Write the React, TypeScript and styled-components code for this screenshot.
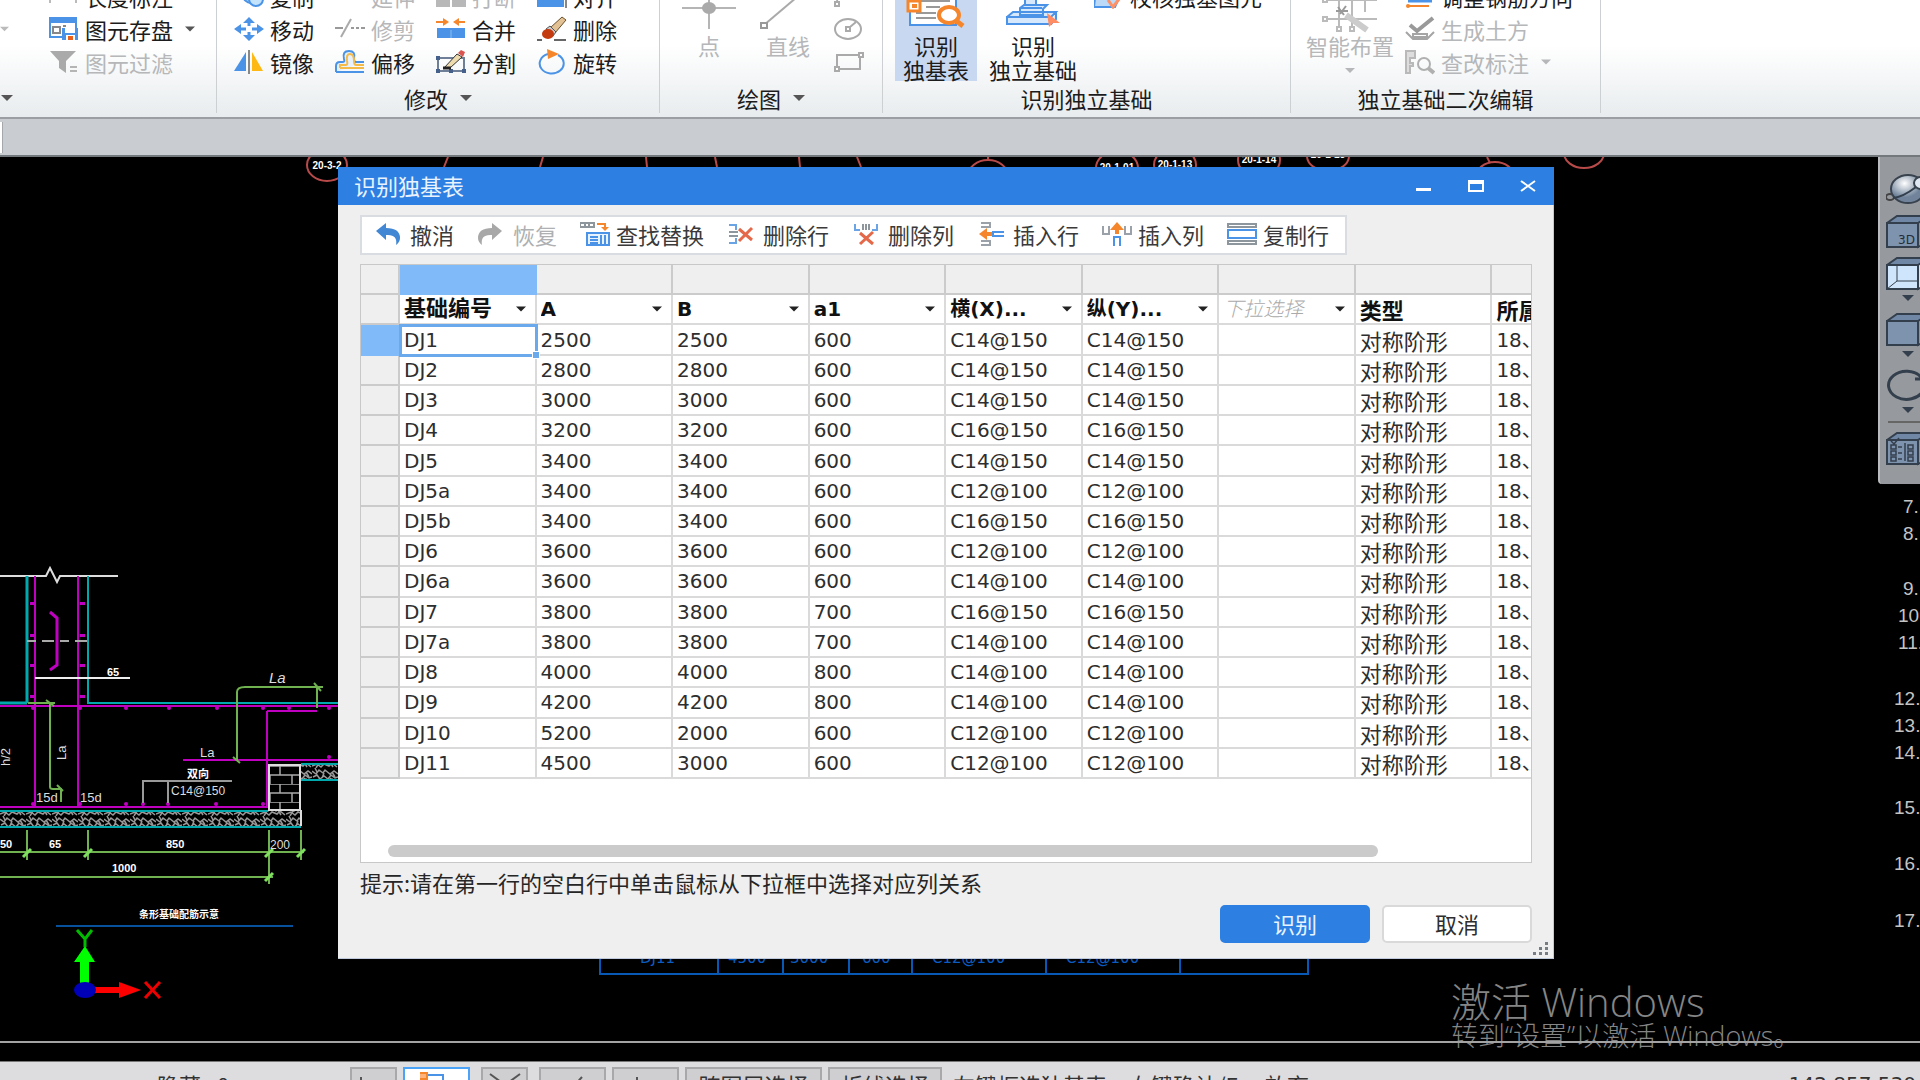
import React from 'react';
import styled, { createGlobalStyle } from 'styled-components';

const cjk = '"Noto Sans CJK SC", sans-serif';
const latin = `"DejaVu Sans", ${cjk}`;

const GlobalStyle = createGlobalStyle`
  *, *::before, *::after { box-sizing: border-box; }
  html, body { margin: 0; background: #000; overflow: hidden; }
  body { font-family: ${cjk}; font-size: 22px; color: #1c1c1c; }
  button, select { font: inherit; color: inherit; margin: 0; padding: 0; border: 0; background: none; text-align: left; white-space: nowrap; }
  svg { display: block; flex: none; }
`;

const Shell = styled.div`
  display: flex;
  flex-direction: column;
  height: 100vh;
  overflow: hidden;
`;

/* ---------- ribbon ---------- */

const Ribbon = styled.header`
  display: flex;
  flex: none;
  height: 119px;
  overflow: hidden;
  background: linear-gradient(#fff 0 45px, #e8ecee 117px);
  border-bottom: 2px solid #9b9fa3;
`;

const Group = styled.section<{ $width: number; $pad?: number }>`
  flex: none;
  width: ${(p) => p.$width}px;
  height: 113px;
  border-right: 1px solid #cdd0d2;
  & > div:first-child { padding-left: ${(p) => p.$pad ?? 0}px; }
`;

const Tools = styled.div`
  display: flex;
  height: 102px;
  margin-top: -21px;
`;

const ToolGrid = styled.div<{ $cols: string }>`
  display: grid;
  grid-template-columns: ${(p) => p.$cols};
  grid-auto-rows: 33px;
  grid-auto-flow: row;
`;

const Tool = styled.button`
  display: flex;
  align-items: center;
  gap: 6px;
  line-height: 32px;
  &:disabled { color: #b5b7b9; }
`;

const BigTool = styled.button<{ $width: number; $active?: boolean }>`
  display: flex;
  flex-direction: column;
  align-items: center;
  flex: none;
  width: ${(p) => p.$width}px;
  height: 102px;
  line-height: 24px;
  text-align: center;
  background: ${(p) => (p.$active ? '#c8d8f0' : 'none')};
  &:disabled { color: #b5b7b9; }
`;

const GroupLabel = styled.div`
  display: flex;
  align-items: center;
  justify-content: center;
  gap: 12px;
  height: 24px;
  margin-top: 5px;
  line-height: 24px;
`;

const Spacer = styled.div<{ $width: number }>`
  flex: none;
  width: ${(p) => p.$width}px;
`;

const TabStrip = styled.div`
  flex: none;
  height: 38px;
  padding: 3px 0;
  background: #c9ccd1;
  border-bottom: 2px solid #73787d;
`;

const Tab = styled.div`
  width: 3px;
  height: 31px;
  background: #fff;
  border-right: 1px solid #a5a8ab;
`;

const Caret = ({ color = '#555', w = 12 }: { color?: string; w?: number }) => (
  <svg width={w} height="6" viewBox="0 0 12 6"><path d="M0 0h12L6 6z" fill={color} /></svg>
);

const B = '#4b93e6';
const O = '#f5862b';
const G = '#b4b6b8';

const Icon = ({ children }: { children: React.ReactNode }) => (
  <svg width="30" height="26" viewBox="0 0 30 26" fill="none">{children}</svg>
);

const icons = {
  dimension: <Icon><path d="M1 0v20M27 0v20" stroke="#777" /><path d="M1 10h26" stroke={B} strokeWidth="2" /></Icon>,
  save: <Icon><rect x="1" y="2" width="26" height="19" stroke={B} strokeWidth="2" fill="#fff" /><path d="M0 2h28v5H0z" fill={B} /><path d="M4 11h7v6H4zM14 10h3" stroke="#888" strokeWidth="2" /><path d="M13 12h16v12H13z" fill={B} /><path d="M16 12h10v5H16z" fill="#fff" /><path d="M17 19h9v5h-9z" fill="#fff" /><path d="M19 20h5v4h-5z" fill="#e8601c" /></Icon>,
  filter: <Icon><path d="M1 2h26L17 12v12l-7-5v-7z" fill="#aaa" /><path d="M21 18h7M21 22h7" stroke="#b5b5b5" strokeWidth="2" /></Icon>,
  copy: <Icon><circle cx="17" cy="12" r="8" fill="#9bd0f5" stroke={B} strokeWidth="2" /><circle cx="22" cy="16" r="7" fill="#c2e3fb" stroke={B} strokeWidth="2" /></Icon>,
  move: <Icon><path d="M15 6v14M4 13h8M18 13h8" stroke={B} strokeWidth="3" /><path d="M15 1l6 6H9zM15 25l6-6H9zM0 13l7-5v10zM30 13l-7-5v10z" fill={B} /><path d="M12 10h6v6h-6z" fill="#fff" /></Icon>,
  mirror: <Icon><path d="M12 3v19H0z" fill={B} /><path d="M18 3v19h11z" fill="#fdb813" /><path d="M15 1v24" stroke="#888" strokeWidth="2" /></Icon>,
  extend: <Icon><path d="M20 12l5-14" stroke={G} strokeWidth="2" /></Icon>,
  trim: <Icon><path d="M0 12h8M16 12h3M21 12h3M26 12h4" stroke="#999" strokeWidth="2" /><path d="M6 21L16 3" stroke="#aaa" strokeWidth="2" /></Icon>,
  offset: <Icon><path d="M1 23v-6q0-4 4-4h3q2 0 1-3-2-8 5-8t5 8q0 3 2 3h8" stroke={B} strokeWidth="2" fill="#e6f1fb" /><path d="M1 23h28" stroke={B} strokeWidth="2" /><path d="M5 19v-3h6q2 0 1-4-1-7 3-7t4 7q0 4 2 4h8M5 19h24" stroke="#f4bb49" strokeWidth="2" /></Icon>,
  brk: <Icon><path d="M0 11h14v13H0zM16 11h14v13H16z" fill="#b8b8b8" /></Icon>,
  merge: <Icon><path d="M1 12h28v10H1z" fill={B} /><path d="M15 14v8" stroke="#8bbdf2" /><path d="M0 6h8M29 6h-8" stroke={O} strokeWidth="2" /><path d="M7 2l6 4-6 4zM23 2l-6 4 6 4z" fill={O} /></Icon>,
  split: <Icon><path d="M2 9h26v13H2z" stroke="#6f7f98" strokeWidth="2" /><path d="M0 7h4v4H0zM0 20h4v4H0zM26 20h4v4h-4zM13 20h4v4h-4z" fill="#46608c" /><path d="M8 19L21 5l5 3-12 11z" fill="#efdcae" stroke="#333" /><path d="M22 4l3-3 4 2-2 5z" fill="#d9534f" /><path d="M7 19h8" stroke="#222" strokeWidth="3" /></Icon>,
  align: <Icon><path d="M0 9h27v15H0z" fill={B} /><path d="M29 0v25" stroke="#888" strokeWidth="2" /></Icon>,
  erase: <Icon><path d="M13 12L25 1l4 3-11 13z" fill="#e2c294" stroke="#6b4f2a" /><path d="M9 13l4-3 6 6-3 4z" fill="#ccc" stroke="#555" /><ellipse cx="11" cy="18" rx="6" ry="5" fill="#c43b10" /><path d="M0 24h5M17 24h12" stroke="#666" strokeWidth="2" /></Icon>,
  rotate: <Icon><path d="M11 5A12 10 0 1 0 21 6" stroke={B} strokeWidth="2" /><path d="M10 0l12 5-11 5z" fill={O} /></Icon>,
  verify: <Icon><path d="M1 15h24l-4 9H0zM8 7h14v6H6z" fill="#bcd9f7" stroke={B} strokeWidth="2" /><path d="M14 17l5 7 10-13" stroke="#ff9166" strokeWidth="3" /></Icon>,
  direction: <Icon><path d="M3 18h24" stroke={B} strokeWidth="3" /><path d="M4 23h20" stroke={O} strokeWidth="2" /><circle cx="3" cy="23" r="2" fill={O} /></Icon>,
  earth: <Icon><path d="M5 9l7 6L28 2" stroke="#999" strokeWidth="4" /><path d="M1 16l7 7h14l7-7M8 18h14v3H8z" stroke="#a5a5a5" strokeWidth="2" /></Icon>,
  inspect: <Icon><path d="M1 2h9v7H5v5h3v3H5v7H1z" stroke="#b9b9b9" strokeWidth="2" fill="#ddd" /><circle cx="19" cy="15" r="6" stroke="#b0b0b0" strokeWidth="2" /><path d="M23 19l6 5" stroke="#b0b0b0" strokeWidth="4" /></Icon>,
};

function RibbonBar() {
  return (
    <Ribbon>
      <Group $width={217}>
        <Tools>
          <ToolGrid $cols="49px auto">
            <Tool aria-label="绘"><Spacer $width={16} /><Caret color="#bbb" w={9} /></Tool>
            <Tool>{icons.dimension}长度标注<Spacer $width={3} /><Caret color="#bbb" w={9} /></Tool>
            <Tool disabled aria-label="更多"><Caret color="#bbb" w={9} /></Tool>
            <Tool>{icons.save}图元存盘<Spacer $width={0} /><Caret w={10} /></Tool>
            <span />
            <Tool disabled>{icons.filter}图元过滤</Tool>
          </ToolGrid>
        </Tools>
        <GroupLabel><Caret /><Spacer $width={190} /></GroupLabel>
      </Group>
      <Group $width={443} $pad={17}>
        <Tools>
          <ToolGrid $cols="repeat(4, 101px)">
            <Tool>{icons.copy}复制</Tool>
            <Tool disabled>{icons.extend}延伸</Tool>
            <Tool disabled>{icons.brk}打断</Tool>
            <Tool>{icons.align}对齐<Spacer $width={0} /><Caret color="#bbb" w={9} /></Tool>
            <Tool>{icons.move}移动</Tool>
            <Tool disabled>{icons.trim}修剪</Tool>
            <Tool>{icons.merge}合并</Tool>
            <Tool>{icons.erase}删除</Tool>
            <Tool>{icons.mirror}镜像</Tool>
            <Tool>{icons.offset}偏移</Tool>
            <Tool>{icons.split}分割</Tool>
            <Tool>{icons.rotate}旋转</Tool>
          </ToolGrid>
        </Tools>
        <GroupLabel>修改<Caret /></GroupLabel>
      </Group>
      <Group $width={223} $pad={10}>
        <Tools>
          <BigTool $width={78} disabled>
            <svg width="54" height="54" viewBox="0 -21 54 54"><path d="M0 8h54M27-21v50" stroke="#b5b5b5" strokeWidth="2" /><ellipse cx="27" cy="8" rx="7" ry="6" fill="#aaa" /></svg>
            点
          </BigTool>
          <BigTool $width={80} disabled>
            <svg width="56" height="54" viewBox="0 -21 56 54" fill="none"><path d="M4 25L50-14" stroke="#aaa" strokeWidth="2" /><path d="M1 23h6v5H1z" fill="#fff" stroke="#999" strokeWidth="2" /></svg>
            直线
          </BigTool>
          <ToolGrid $cols="40px">
            <Tool disabled aria-label="弧"><Spacer $width={0} /><svg width="30" height="24" viewBox="0 0 30 24" fill="none" stroke="#aaa" strokeWidth="2"><path d="M1 18h4v4H1zM3 17q1-6 4-10" /></svg></Tool>
            <Tool disabled aria-label="圆"><Spacer $width={0} /><svg width="30" height="24" viewBox="0 0 30 24" fill="none" stroke="#aaa" strokeWidth="2"><ellipse cx="14" cy="12" rx="13" ry="10" /><path d="M12 10h4v4h-4zM16 10l6-5" /></svg></Tool>
            <Tool disabled aria-label="矩形"><Spacer $width={0} /><svg width="30" height="24" viewBox="0 0 30 24" fill="none" stroke="#aaa" strokeWidth="2"><path d="M3 5h23v14H3z" /><path d="M25 3h4v4h-4zM1 17h4v4H1z" fill="#fff" /></svg></Tool>
          </ToolGrid>
        </Tools>
        <GroupLabel>绘图<Caret /></GroupLabel>
      </Group>
      <Group $width={408} $pad={12}>
        <Tools>
          <BigTool $width={82} $active>
            <svg width="60" height="54" viewBox="0 -21 60 54" fill="none">
              <path d="M4-21v46h46v-46" fill="#fff" stroke={B} strokeWidth="2" />
              <path d="M10 1h34M20 7h14M10 13h20M10 18h20" stroke="#999" strokeWidth="2" />
              <path d="M2 1h12v10H2z" fill="#fff" stroke={O} strokeWidth="3" /><path d="M6 4h5v4H6z" fill={O} />
              <ellipse cx="43" cy="15" rx="10" ry="8" fill="#fff" stroke={O} strokeWidth="4" /><path d="M49 20l8 6" stroke={O} strokeWidth="5" />
            </svg>
            <span>识别</span><span>独基表</span>
          </BigTool>
          <Spacer $width={6} />
          <BigTool $width={100}>
            <svg width="54" height="54" viewBox="0 -21 54 54" fill="none" stroke={B} strokeWidth="2">
              <path d="M1 17l6-5h43l-5 5zM1 17h44v7H1zM45 24l5-5v-7M14 8l4-3h23l-4 4v6H14zM14 8h22M19 5v-26h11V5z" fill="#d6e8fb" />
              <path d="M41 13l13 10-7 0-4 4z" fill="#ff8c62" stroke="none" />
            </svg>
            <span>识别</span><span>独立基础</span>
          </BigTool>
          <Spacer $width={11} />
          <ToolGrid $cols="auto"><Tool>{icons.verify}校核独基图元</Tool></ToolGrid>
        </Tools>
        <GroupLabel>识别独立基础</GroupLabel>
      </Group>
      <Group $width={310} $pad={9}>
        <Tools>
          <BigTool $width={100} disabled>
            <svg width="56" height="54" viewBox="0 -21 56 54" fill="none" stroke="#bbb" strokeWidth="2">
              <path d="M5 0h50M5 19h50M17-21v47M30-21v47M43-21v33" /><path d="M1-2h4v4H1zM1 17h4v4H1zM15 27h4v4h-4zM28 27h4v4h-4z" fill="#fff" />
              <path d="M16 7l6 8M24 6l-6 8M14 11h12" stroke="#999" /><path d="M24 15l21 15" stroke="#ccc" strokeWidth="6" />
            </svg>
            <span>智能布置</span>
            <svg width="10" height="17" viewBox="0 0 10 17"><path d="M0 11h10l-5 5z" fill="#b5b7b9" /></svg>
          </BigTool>
          <Spacer $width={5} />
          <ToolGrid $cols="auto">
            <Tool>{icons.direction}调整钢筋方向</Tool>
            <Tool disabled>{icons.earth}生成土方</Tool>
            <Tool disabled>{icons.inspect}查改标注<Spacer $width={0} /><Caret color="#b5b7b9" w={10} /></Tool>
          </ToolGrid>
        </Tools>
        <GroupLabel>独立基础二次编辑</GroupLabel>
      </Group>
    </Ribbon>
  );
}

/* ---------- drawing canvas ---------- */

const Canvas = styled.main`
  position: relative;
  flex: 1;
  min-height: 0;
  overflow: hidden;
  background: #000;
`;

const Drawing = styled.svg`
  position: absolute;
  top: 0;
  left: 0;
  font-family: "Liberation Sans Narrow", "Liberation Sans", ${cjk};
`;

const Notes = styled.svg`
  position: absolute;
  top: 0;
  right: 0;
  font-family: "Liberation Sans Narrow", "Liberation Sans", ${cjk};
`;

const CommandLine = styled.div`
  position: absolute;
  left: 0;
  right: 0;
  bottom: 0;
  height: 21px;
  border-top: 2px solid #a3a3a3;
  border-bottom: 1px solid #777;
`;

const Watermark = styled.div`
  position: absolute;
  right: 109px;
  bottom: 10px;
  width: 360px;
  color: #858585;
  font-family: "Open Sans", ${cjk};
  font-weight: 300;
  font-size: 27px;
  line-height: 32px;
  white-space: nowrap;
  strong { display: block; font-weight: 300; font-size: 40px; line-height: 36px; }
`;

const range = (n: number) => Array.from({ length: n }, (_, i) => i);

function CadDrawing() {
  const m = '#c000c0';
  const c = '#00a9ad';
  const g = '#6fb24f';
  return (
    <Drawing width="1620" height="905" viewBox="0 157 1620 905" fill="none" aria-hidden="true">
      <defs>
        <pattern id="gravel" width="26" height="16" patternUnits="userSpaceOnUse">
          <path d="M0 3l4 3 3-4 4 3 2-3 5 4 4-3 4 3M1 9l4-2 3 4 4-3 4 3 3-4 4 3 3-1M0 14l5-2 4 3 3-3 5 2 3-3 5 4M3 0l2 4M12 5l-2 5M20 4l3 5M7 11l-3 5M18 10l3 5" stroke="#999" strokeWidth="1.5" fill="none" />
        </pattern>
        <pattern id="brick" width="22" height="18" patternUnits="userSpaceOnUse" x="268" y="766">
          <path d="M0 0h22M0 9h22M12 0v9M2 9v9" stroke="#aaa" strokeWidth="1.5" />
        </pattern>
      </defs>

      <g stroke="#b84a4a" strokeWidth="2">
        <ellipse cx="327" cy="165" rx="20" ry="16" />
        <path d="M448 157l-4 10M543 157l-3 10M646 157l1 10M715 157l2 10M799 157l1 10M857 157l4 10M988 157v4" />
        <ellipse cx="988" cy="176" rx="20" ry="16" /><ellipse cx="1117" cy="168" rx="21" ry="17" />
        <ellipse cx="1175" cy="165" rx="21" ry="17" /><ellipse cx="1259" cy="160" rx="21" ry="17" />
        <ellipse cx="1328" cy="156" rx="21" ry="15" /><ellipse cx="1495" cy="177" rx="19" ry="15" />
        <path d="M1487 157l3 6" /><ellipse cx="1584" cy="153" rx="20" ry="15" />
      </g>
      <g fill="#fff" fontSize="10" fontWeight="700" textAnchor="middle">
        <text x="327" y="169">20-3-2</text><text x="1175" y="168">20-1-13</text>
        <text x="1259" y="163">20-1-14</text><text x="1117" y="171">20-1-01</text><text x="1328" y="158">20-1-15</text>
      </g>

      <path d="M0 576h46l4-8 7 14 3-6h58" stroke="#ddd" strokeWidth="2" />
      <path d="M27 576v127M0 703h27" stroke={c} strokeWidth="3" />
      <path d="M88 576v127h250" stroke={c} strokeWidth="2" />
      <path d="M35 576v230M78 576v230M0 706h338M0 807h268M267 711v97M267 711h50M183 760h155" stroke={m} strokeWidth="2" />
      <path d="M50 612l7 6v47l-7 5" stroke={m} strokeWidth="3" />
      <g fill={m}>
        {[602, 634, 664, 695].map((y) => <React.Fragment key={y}><path d={`M30 ${y}h5v3h-5z`} /><path d={`M80 ${y}h5v3h-5z`} /></React.Fragment>)}
        {[33, 80, 126, 169, 217, 263, 289, 329].map((x) => <circle key={x} cx={x} cy="708" r="2" />)}
        {[33, 80, 126, 143, 168, 216, 263].map((x) => <circle key={x} cx={x} cy="804" r="2" />)}
        <circle cx="329" cy="757" r="2" />
      </g>
      <path d="M27 641h61" stroke="#aaa" strokeWidth="2" strokeDasharray="9 6 12 6" />
      <path d="M35 678h95" stroke="#eee" strokeWidth="2" />
      <path d="M143 803v-22h89M168 781v22" stroke="#999" strokeWidth="2" />

      <g stroke={g} strokeWidth="2">
        <path d="M28 703h27M50 703v84q0 2 3 2h8v13M46 700l8 6M57 785l6 6M237 760v-68q0-5 8-5h78M317 687v21M233 757l7 6M314 683l7 8" />
        <path d="M0 852h304M0 877h273M27 830v30M88 830v30M269 830v54M301 830v30" />
        <path d="M23 857l8-8M84 857l8-8M265 857l8-8M297 857l8-8M265 881l8-8" stroke="#7fe05f" strokeWidth="3" />
      </g>

      <path d="M0 811h301v16H0z" fill="url(#gravel)" /><path d="M301 764h37v16h-37z" fill="url(#gravel)" />
      <path d="M0 811h268M0 827h301M301 764h37M301 780h37" stroke={c} strokeWidth="2" />
      <path d="M269 765h31v45h-31z" fill="url(#brick)" stroke="#ddd" strokeWidth="2" />
      <path d="M301 810v16" stroke="#ddd" strokeWidth="2" />

      <g fill="#ddd" fontSize="13">
        <text x="269" y="683" fontSize="15" fontStyle="italic">La</text><text x="200" y="757">La</text>
        <text x="171" y="795" fontSize="12">C14@150</text><text x="36" y="802">15d</text><text x="80" y="802">15d</text><text x="270" y="849" fontSize="12">200</text>
        <text transform="translate(66 760) rotate(-90)">La</text>
        <text transform="translate(10 766) rotate(-90)">h/2</text>
      </g>
      <g fill="#fff" fontSize="11" fontWeight="700">
        <text x="107" y="676">65</text><text x="187" y="778">双向</text><text x="0" y="848">50</text><text x="49" y="848">65</text>
        <text x="166" y="848">850</text><text x="112" y="872">1000</text>
      </g>
      <text x="139" y="918" fill="#fff" fontSize="10" fontWeight="700">条形基础配筋示意</text>
      <path d="M56 926h237" stroke="#07509c" strokeWidth="2" />

      <path d="M80 987V962h-6l11-16 10 16h-6v25z" fill="#0f0" />
      <path d="M92 987h27v-5l22 8-22 8v-5H92z" fill="#f00" />
      <ellipse cx="85" cy="990" rx="11" ry="8" fill="#0000b8" />
      <path d="M77 930l8 9 7-9M85 939v8" stroke="#0b0" strokeWidth="3" />
      <path d="M145 982l15 16M160 982l-15 16" stroke="#e00" strokeWidth="3" />

      <path d="M600 940v34h708v-34M718 940v34M783 940v34M849 940v34M912 940v34M1046 940v34M1180 940v34" stroke="#0759b5" strokeWidth="2" />
      <g fill="#0a5cc0" fontSize="15" fontFamily="DejaVu Sans">
        <text x="640" y="963">DJ11</text><text x="728" y="963">4500</text><text x="790" y="963">3000</text>
        <text x="862" y="963">600</text><text x="932" y="963">C12@100</text><text x="1066" y="963">C12@100</text>
      </g>
    </Drawing>
  );
}

const noteLines: [string, number, number][] = [
  ['6.', 22, 483], ['7.', 22, 513], ['8.', 22, 540], ['9.', 22, 595], ['10.', 17, 622], ['11.', 17, 649],
  ['12.', 13, 705], ['13.', 13, 732], ['14.', 13, 759], ['15.', 13, 814], ['16.', 13, 870], ['17.', 13, 927],
];

const ViewPanel = styled.nav`
  position: absolute;
  top: 0;
  right: 0;
  display: flex;
  flex-direction: column;
  width: 42px;
  height: 327px;
  padding: 12px 0 0 6px;
  overflow: hidden;
  background: #96999d;
  border-left: 2px solid #b9bbbe;
  border-radius: 0 0 0 4px;
  button { flex: none; height: 42px; }
`;

const ViewArrow = styled.div`
  flex: none;
  height: 14px;
  padding: 0 0 0 16px;
`;

const Cube = ({ fill = '#7e93ae', children }: { fill?: string; children?: React.ReactNode }) => (
  <svg width="42" height="36" viewBox="0 0 42 36" fill="none" stroke="#333f4c" strokeWidth="2">
    <path d="M1 9l10-7h31v7z" fill="#7088a6" /><path d="M1 9h31v24H1z" fill={fill} /><path d="M32 9l10-7v26l-10 5z" fill={fill} />
    {children}
  </svg>
);

function ViewTools() {
  const arrow = <ViewArrow><Caret color="#333f4c" /></ViewArrow>;
  return (
    <ViewPanel>
      <button aria-label="动态观察">
        <svg width="42" height="36" viewBox="0 0 42 36" fill="none">
          <defs><radialGradient id="orb" cx=".4" cy=".3"><stop stopColor="#fff" /><stop offset="1" stopColor="#70839a" /></radialGradient></defs>
          <ellipse cx="4" cy="25" rx="4" ry="3" stroke="#444" strokeWidth="2" /><ellipse cx="22" cy="17" rx="17" ry="14" fill="url(#orb)" stroke="#39434f" strokeWidth="2" />
          <path d="M7 26q10-1 23-11" stroke="#333f4c" strokeWidth="2" /><ellipse cx="35" cy="11" rx="7" ry="6" fill="#dfe8f2" stroke="#39434f" strokeWidth="2" />
        </svg>
      </button>
      <button aria-label="三维"><Cube><text x="12" y="30" fontSize="12" fontFamily="DejaVu Sans" fill="#222d3a" stroke="none">3D</text></Cube></button>
      <button aria-label="线框"><Cube fill="#cfe5fb"><path d="M11 9v16h21M1 33l10-8" strokeWidth="1" /></Cube></button>
      {arrow}
      <button aria-label="实体"><Cube /></button>
      {arrow}
      <button aria-label="旋转视图"><svg width="42" height="36" viewBox="0 0 42 36" fill="none" stroke="#333f4c" strokeWidth="3"><path d="M35 9a18 14 0 1 0 2 14M29 11h9" /></svg></button>
      {arrow}
      <svg width="36" height="7" viewBox="0 0 36 7"><path d="M2 1h34" stroke="#666" strokeWidth="2" /></svg>
      <button aria-label="显示设置"><Cube><path d="M5 14h5v4H5zM5 20h5v4H5zM5 26h5v4H5zM22 14h5v4h-5zM22 20h5v4h-5zM22 26h5v4h-5zM12 16h4M12 22h4M12 28h4M19 12v18M5 10l3 3 5-6" strokeWidth="1.5" /></Cube></button>
    </ViewPanel>
  );
}

/* ---------- dialog ---------- */

const Dialog = styled.section`
  position: absolute;
  top: 10px;
  left: 338px;
  display: flex;
  flex-direction: column;
  width: 1216px;
  height: 792px;
  background: #efefef;
  box-shadow: inset -1px -1px #bfcbdc;
`;

const TitleBar = styled.header`
  display: flex;
  align-items: center;
  flex: none;
  height: 38px;
  padding: 0 0 0 16px;
  background: #2d80e2;
  color: #e9f3ff;
  h1 { flex: 1; margin: 0; padding-bottom: 2px; font-size: 22px; font-weight: 400; line-height: 34px; }
  button { display: flex; align-items: center; justify-content: center; width: 52px; height: 38px; }
`;

const DialogBody = styled.div`
  display: flex;
  flex-direction: column;
  align-items: flex-start;
  flex: 1;
  min-height: 0;
  padding: 10px 22px 16px;
`;

const Toolbar = styled.div`
  display: flex;
  flex: none;
  height: 40px;
  padding: 0 1px 0 4px;
  background: #fff;
  border: 2px solid #d9dce0;
`;

const ToolbarButton = styled.button`
  display: flex;
  align-items: center;
  gap: 6px;
  padding: 0 15px 3px 8px;
  line-height: 32px;
  color: #3a3a3a;
  &:disabled { color: #aeb0b2; }
`;

const GridFrame = styled.div`
  position: relative;
  align-self: stretch;
  flex: 1;
  margin-top: 9px;
  overflow: hidden;
  background: #fff;
  border: 1px solid #c8c8c8;
`;

const Grid = styled.table`
  width: 1268px;
  height: 514px;
  table-layout: fixed;
  border-collapse: separate;
  border-spacing: 0;
  font-family: ${latin};
  font-size: 20px;
  line-height: 24px;
  color: #2e2e2e;
  th, td {
    height: 30px;
    padding: 0 0 0 4px;
    border-right: 2px solid #dadada;
    border-bottom: 2px solid #dadada;
    text-align: left;
    white-space: nowrap;
    overflow: hidden;
    font-weight: 400;
  }
`;

const HeadCell = styled.th<{ $on?: boolean }>`
  && {
    background: ${(p) => (p.$on ? '#80baf9' : '#efefef')};
    border-color: ${(p) => (p.$on ? '#80baf9' : '#cbcbcb')};
  }
`;

const Chinese = styled.span`
  display: block;
  font-family: ${cjk};
  font-size: 22px;
  line-height: 24px;
`;

const Picker = styled.div`
  display: flex;
  align-items: center;
  padding-right: 9px;
`;

const ColumnSelect = styled.select<{ $empty?: boolean; $wide?: boolean }>`
  flex: 1;
  min-width: 0;
  height: 26px;
  appearance: none;
  font-size: ${(p) => (p.$wide ? 22 : 20)}px;
  font-weight: ${(p) => (p.$empty ? 300 : 700)};
  font-style: ${(p) => (p.$empty ? 'italic' : 'normal')};
  color: ${(p) => (p.$empty ? '#aaa' : '#111')};
`;

const FixedTitle = styled.td`
  && { font-family: ${cjk}; font-size: 22px; font-weight: 700; color: #111; }
`;

const ActiveCell = styled.td`
  && {
    position: relative;
    overflow: visible;
    outline: 3px solid #6aa9ec;
    outline-offset: -2px;
  }
  &::after {
    content: '';
    position: absolute;
    z-index: 1;
    right: -5px;
    bottom: -5px;
    width: 8px;
    height: 8px;
    background: #6aa9ec;
    border: 1px solid #fff;
  }
`;

const ScrollThumb = styled.div`
  position: absolute;
  left: 27px;
  right: 153px;
  bottom: 5px;
  height: 12px;
  border-radius: 6px;
  background: #cbcbcb;
`;

const Hint = styled.p`
  margin: 3px 0 2px;
  line-height: 32px;
  color: #262626;
`;

const Actions = styled.div`
  display: flex;
  align-self: flex-end;
  gap: 12px;
  margin-top: 5px;
`;

const ActionButton = styled.button<{ $primary?: boolean }>`
  width: 150px;
  height: 38px;
  padding-bottom: 2px;
  border: 2px solid ${(p) => (p.$primary ? '#2d80e2' : '#d9d9d9')};
  border-radius: 5px;
  background: ${(p) => (p.$primary ? '#2d80e2' : '#fff')};
  color: ${(p) => (p.$primary ? '#e9f3ff' : '#2e2e2e')};
  line-height: 32px;
  text-align: center;
`;

const SizeGrip = styled.svg`
  position: absolute;
  right: 5px;
  bottom: 4px;
`;

const TIcon = ({ children }: { children: React.ReactNode }) => (
  <svg width="30" height="26" viewBox="0 0 30 26" fill="none" strokeWidth="2">{children}</svg>
);

const toolbarItems: { label: string; disabled?: boolean; icon: React.ReactNode }[] = [
  { label: '撤消', icon: <TIcon><path d="M2 10L12 2v5q14 0 14 10 0 4-4 7 2-11-10-10v5z" fill="#4187d4" /></TIcon> },
  { label: '恢复', disabled: true, icon: <TIcon><path d="M25 10L15 2v5Q1 7 1 17q0 4 4 7-2-11 10-10v5z" fill="#a8a8a8" /></TIcon> },
  { label: '查找替换', icon: <TIcon><path d="M0 2h14v4H0zM5 2v4M9 2v4" stroke="#8d959d" /><path d="M17 3h8v6" stroke={O} /><path d="M21 6h8l-4 4z" fill={O} /><path d="M7 12h22v12H7z" stroke={B} fill="#e8f3ff" /><path d="M7 12h22M10 16h8M10 19h8M10 22h8M21 14v9M25 14v9" stroke={B} /></TIcon> },
  { label: '删除行', icon: <TIcon><path d="M2 4h7v5M2 22h7v-5" stroke="#6aa4e4" /><path d="M2 11h9M2 15h9" stroke="#8d959d" /><path d="M12 8l13 11M25 7L12 20" stroke="#e4694a" strokeWidth="3" /></TIcon> },
  { label: '删除列', icon: <TIcon><path d="M3 3v6h5M25 3v6h-5" stroke="#6aa4e4" /><path d="M11 3v6M14 3v6M17 3v6" stroke="#8d959d" /><path d="M8 12l13 11M21 11L8 23" stroke="#e4694a" strokeWidth="3" /></TIcon> },
  { label: '插入行', icon: <TIcon><path d="M4 2h9v4H4M4 24h9v-4H4" stroke="#9aa1a8" /><path d="M27 11H16v4h11" stroke={B} /><path d="M8 13h7" stroke={O} strokeWidth="4" /><path d="M2 13l8-6v12z" fill={O} /></TIcon> },
  { label: '插入列', icon: <TIcon><path d="M1 5v8h6V5M23 5v8h6V5" stroke="#9aa1a8" /><path d="M12 25v-9h6v9" stroke={B} /><path d="M15 8v5" stroke={O} strokeWidth="4" /><path d="M15 1l7 8H8z" fill={O} /></TIcon> },
  { label: '复制行', icon: <TIcon><path d="M1 3h28v3H1zM1 20h28v3H1z" stroke="#8d959d" /><path d="M1 9h28v8H1z" stroke={B} /></TIcon> },
];

const rows: string[][] = [
  ['DJ1', '2500', '2500', '600', 'C14@150'],
  ['DJ2', '2800', '2800', '600', 'C14@150'],
  ['DJ3', '3000', '3000', '600', 'C14@150'],
  ['DJ4', '3200', '3200', '600', 'C16@150'],
  ['DJ5', '3400', '3400', '600', 'C14@150'],
  ['DJ5a', '3400', '3400', '600', 'C12@100'],
  ['DJ5b', '3400', '3400', '600', 'C16@150'],
  ['DJ6', '3600', '3600', '600', 'C12@100'],
  ['DJ6a', '3600', '3600', '600', 'C14@100'],
  ['DJ7', '3800', '3800', '700', 'C16@150'],
  ['DJ7a', '3800', '3800', '700', 'C14@100'],
  ['DJ8', '4000', '4000', '800', 'C14@100'],
  ['DJ9', '4200', '4200', '800', 'C14@100'],
  ['DJ10', '5200', '2000', '600', 'C12@100'],
  ['DJ11', '4500', '3000', '600', 'C12@100'],
];

const columns = ['基础编号', 'A', 'B', 'a1', '横(X)...', '纵(Y)...', '下拉选择'];

function RecognizeDialog() {
  return (
    <Dialog role="dialog" aria-labelledby="dialog-title">
      <TitleBar>
        <h1 id="dialog-title">识别独基表</h1>
        <button aria-label="最小化"><svg width="16" height="12" viewBox="0 0 16 12"><path d="M0 8h15v3H0z" fill="#fff" /></svg></button>
        <button aria-label="最大化"><svg width="16" height="12" viewBox="0 0 16 12"><path d="M1 1h14v10H1zM1 3h14" fill="none" stroke="#fff" strokeWidth="2" /></svg></button>
        <button aria-label="关闭"><svg width="16" height="12" viewBox="0 0 16 12"><path d="M1 1l14 10M15 1L1 11" stroke="#fff" strokeWidth="2" /></svg></button>
      </TitleBar>
      <DialogBody>
        <Toolbar>
          {toolbarItems.map((t) => (
            <ToolbarButton key={t.label} disabled={t.disabled}>{t.icon}{t.label}</ToolbarButton>
          ))}
        </Toolbar>
        <GridFrame>
          <Grid>
            <colgroup><col width="39" />{range(9).map((i) => <col key={i} />)}</colgroup>
            <tbody>
              <tr>{range(10).map((i) => <HeadCell key={i} $on={i === 1} />)}</tr>
              <tr>
                <HeadCell />
                {columns.map((c, i) => (
                  <td key={c}>
                    <Picker>
                      <ColumnSelect aria-label={`第${i + 1}列对应关系`} $empty={i === 6} $wide={i === 0}><option>{c}</option></ColumnSelect>
                      <Caret color="#222" w={10} />
                    </Picker>
                  </td>
                ))}
                <FixedTitle>类型</FixedTitle>
                <FixedTitle>所属楼层</FixedTitle>
              </tr>
              {rows.map(([name, a, b, a1, bar], i) => (
                <tr key={name}>
                  <HeadCell $on={i === 0} />
                  {i === 0 ? <ActiveCell>{name}</ActiveCell> : <td>{name}</td>}
                  <td>{a}</td><td>{b}</td><td>{a1}</td><td>{bar}</td><td>{bar}</td><td />
                  <td><Chinese>对称阶形</Chinese></td>
                  <td>18、工程</td>
                </tr>
              ))}
            </tbody>
          </Grid>
          <ScrollThumb />
        </GridFrame>
        <Hint>提示:请在第一行的空白行中单击鼠标从下拉框中选择对应列关系</Hint>
        <Actions>
          <ActionButton $primary>识别</ActionButton>
          <ActionButton>取消</ActionButton>
        </Actions>
      </DialogBody>
      <SizeGrip width="17" height="13" viewBox="0 0 17 13" aria-hidden="true">
        <path d="M13 0h3v3h-3zM7 5h3v3H7zM13 5h3v3h-3zM1 10h3v3H1zM7 10h3v3H7zM13 10h3v3h-3z" fill="#777d85" />
      </SizeGrip>
    </Dialog>
  );
}

/* ---------- status bar ---------- */

const StatusBar = styled.footer`
  display: flex;
  flex: none;
  height: 18px;
  padding: 5px 4px 0 0;
  overflow: hidden;
  background: #dddddf;
  color: #333;
  line-height: 34px;
  white-space: nowrap;
`;

const StatusText = styled.span<{ $width: number }>`
  flex: none;
  width: ${(p) => p.$width}px;
`;

const StatusButton = styled.button<{ $width: number; $on?: boolean; $gap?: number }>`
  display: flex;
  justify-content: center;
  flex: none;
  width: ${(p) => p.$width}px;
  height: 38px;
  margin-right: ${(p) => p.$gap ?? 6}px;
  border: 2px solid ${(p) => (p.$on ? '#4ba3f7' : '#a8a8aa')};
  background: ${(p) => (p.$on ? '#fff' : '#cfcfd1')};
  line-height: 30px;
`;

const StatusIcon = ({ children }: { children: React.ReactNode }) => (
  <svg width="34" height="32" viewBox="0 0 34 32" fill="none" stroke="#555" strokeWidth="2">{children}</svg>
);

const Coordinates = styled.span`
  margin-left: auto;
  font-family: ${latin};
  font-size: 20px;
`;

export default function App() {
  return (
    <Shell>
      <GlobalStyle />
      <RibbonBar />
      <TabStrip><Tab /></TabStrip>
      <Canvas>
        <CadDrawing />
        <Notes width="39" height="905" viewBox="0 157 39 905" aria-hidden="true">
          {noteLines.map(([t, x, y]) => <text key={t} x={x} y={y} fontSize="19" fill="#c4c4c4">{t}</text>)}
        </Notes>
        <ViewTools />
        <Watermark><strong>激活 Windows</strong>转到“设置”以激活 Windows。</Watermark>
        <CommandLine />
        <RecognizeDialog />
      </Canvas>
      <StatusBar>
        <Spacer $width={157} />
        <StatusText $width={193}>隐藏: &nbsp;0</StatusText>
        <StatusButton $width={47} aria-label="正交"><StatusIcon><path d="M4 8v20h24" /></StatusIcon></StatusButton>
        <StatusButton $width={67} $on $gap={11} aria-label="框选"><StatusIcon><path d="M5 6h18v20H5z" stroke={B} /><path d="M-1 4h8v6h-8z" fill="#ffb27a" stroke={O} /></StatusIcon></StatusButton>
        <StatusButton $width={47} $gap={11} aria-label="交点"><StatusIcon><path d="M2 5l30 22M32 5L2 27" /></StatusIcon></StatusButton>
        <StatusButton $width={67} aria-label="垂点"><StatusIcon><path d="M26 8L8 28" /></StatusIcon></StatusButton>
        <StatusButton $width={67} aria-label="中点"><StatusIcon><path d="M8 8v10M2 12h14" /></StatusIcon></StatusButton>
        <StatusButton $width={137}>跨图层选择</StatusButton>
        <StatusButton $width={114} $gap={11}>折线选择</StatusButton>
        <span>左键框选独基表，右键确认/Esc 放弃</span>
        <Coordinates>142 857 530</Coordinates>
      </StatusBar>
    </Shell>
  );
}
